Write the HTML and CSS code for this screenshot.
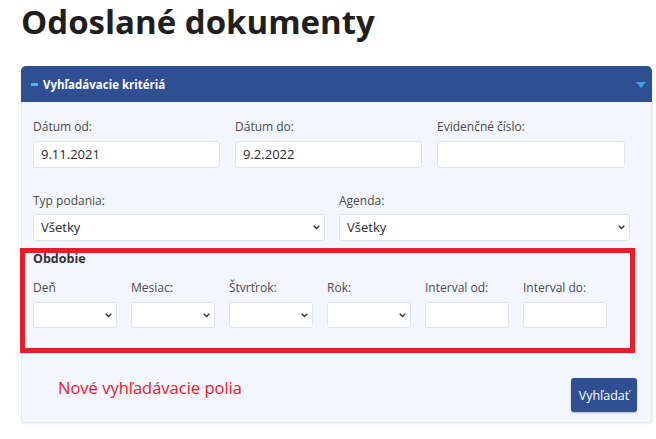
FILE: index.html
```html
<!DOCTYPE html>
<html lang="sk">
<head>
<meta charset="utf-8">
<title>Odoslané dokumenty</title>
<link rel="stylesheet" href="styles.css">
</head>
<body>
<h1 class="title">Odoslané dokumenty</h1>
<div class="card">
  <div class="card-head">
    <span class="dash"></span>
    <span class="head-text">Vyhľadávacie kritériá</span>
    <svg class="head-caret" width="10" height="6" viewBox="0 0 10 6"><path d="M0 0 H10 L5 6 Z" fill="#3ba2e6"/></svg>
  </div>
  <div class="card-body">
    <div class="row row3">
      <div class="field"><div class="label">Dátum od:</div><div class="input">9.11.2021</div></div>
      <div class="field"><div class="label">Dátum do:</div><div class="input">9.2.2022</div></div>
      <div class="field"><div class="label">Evidenčné číslo:</div><div class="input"></div></div>
    </div>
    <div class="row row2">
      <div class="field"><div class="label">Typ podania:</div><div class="input select"><span>Všetky</span><svg class="chev" width="7" height="5" viewBox="0 0 7 5"><path d="M0.7 0.8 L3.5 3.6 L6.3 0.8" fill="none" stroke="#333" stroke-width="1.4"/></svg></div></div>
      <div class="field"><div class="label">Agenda:</div><div class="input select"><span>Všetky</span><svg class="chev" width="7" height="5" viewBox="0 0 7 5"><path d="M0.7 0.8 L3.5 3.6 L6.3 0.8" fill="none" stroke="#333" stroke-width="1.4"/></svg></div></div>
    </div>
    <div class="period">
      <div class="period-title">Obdobie</div>
      <div class="row row6">
        <div class="field"><div class="label">Deň</div><div class="input select small"><span></span><svg class="chev" width="7" height="5" viewBox="0 0 7 5"><path d="M0.7 0.8 L3.5 3.6 L6.3 0.8" fill="none" stroke="#333" stroke-width="1.4"/></svg></div></div>
        <div class="field"><div class="label">Mesiac:</div><div class="input select small"><span></span><svg class="chev" width="7" height="5" viewBox="0 0 7 5"><path d="M0.7 0.8 L3.5 3.6 L6.3 0.8" fill="none" stroke="#333" stroke-width="1.4"/></svg></div></div>
        <div class="field"><div class="label">Štvrťrok:</div><div class="input select small"><span></span><svg class="chev" width="7" height="5" viewBox="0 0 7 5"><path d="M0.7 0.8 L3.5 3.6 L6.3 0.8" fill="none" stroke="#333" stroke-width="1.4"/></svg></div></div>
        <div class="field"><div class="label">Rok:</div><div class="input select small"><span></span><svg class="chev" width="7" height="5" viewBox="0 0 7 5"><path d="M0.7 0.8 L3.5 3.6 L6.3 0.8" fill="none" stroke="#333" stroke-width="1.4"/></svg></div></div>
        <div class="field"><div class="label">Interval od:</div><div class="input small"></div></div>
        <div class="field"><div class="label">Interval do:</div><div class="input small"></div></div>
      </div>
      <div class="frame"></div>
    </div>
    <div class="footer">
      <div class="note">Nové vyhľadávacie polia</div>
      <button class="btn">Vyhľadať</button>
    </div>
  </div>
</div>
</body>
</html>
```

FILE: styles.css
```css
html, body {
  margin: 0;
  padding: 0;
  background: #ffffff;
}
body {
  font-family: "Open Sans", "Noto Sans", sans-serif;
  color: #333;
  width: 656px;
  height: 439px;
  overflow: hidden;
}
.title {
  margin: 0;
  padding-left: 21px;
  font-size: 33px;
  line-height: 44px;
  font-weight: 700;
  color: #1f1f1f;
}
.card {
  margin: 22px 0 0 21px;
  width: 631px;
  border: 1px solid #e4e8ef;
  border-top: none;
  border-radius: 5px 5px 3px 3px;
  background: #f3f6fc;
  box-sizing: border-box;
  box-shadow: 1px 1px 3px rgba(0,0,0,0.06);
}
.card-head {
  height: 36px;
  background: #2f4f93;
  border-radius: 5px 5px 0 0;
  margin: 0 -1px;
  display: flex;
  align-items: center;
  padding: 0 10px 0 10px;
}
.dash {
  width: 7px;
  height: 3px;
  background: #5cb0ee;
  margin-right: 5px;
  margin-top: 1px;
}
.head-text {
  color: #fff;
  font-weight: 700;
  font-size: 11.5px;
  flex: 1;
}
.head-caret {
  margin-right: -4px;
  margin-top: 1px;
}
.card-body {
  padding: 15px 14px 10px 11px;
}
.row {
  display: grid;
}
.row3 {
  grid-template-columns: 187px 187px 188px;
  column-gap: 15px;
}
.row2 {
  grid-template-columns: 292px 291px;
  column-gap: 14px;
  margin-top: 23px;
}
.row6 {
  grid-template-columns: repeat(6, 84px);
  column-gap: 14px;
  margin-top: 10px;
}
.label {
  font-size: 12px;
  line-height: 20px;
  color: #4a4a4a;
  margin-bottom: 4px;
  white-space: nowrap;
}
.row2 .label {
  margin-bottom: 3px;
}
.input {
  height: 27px;
  box-sizing: border-box;
  background: #fff;
  border: 1px solid #dfe3ea;
  border-radius: 3px;
  font-size: 13px;
  line-height: 25px;
  padding: 0 7px;
  color: #2a2a2a;
}
.select {
  display: flex;
  align-items: center;
  justify-content: space-between;
  padding-right: 4px;
}
.small {
  height: 26px;
}
.period {
  position: relative;
  margin-top: 9px;
}
.period-title {
  font-size: 12.5px;
  font-weight: 700;
  line-height: 18px;
  color: #333;
}
.frame {
  position: absolute;
  left: -13px;
  top: -2px;
  right: 2px;
  bottom: -25px;
  border: 5px solid #e41e26;
  pointer-events: none;
}
.footer {
  display: flex;
  align-items: flex-start;
  justify-content: space-between;
  margin-top: 50px;
}
.note {
  color: #e2202a;
  font-size: 16.5px;
  line-height: 20px;
  padding-left: 25px;
}
.btn {
  height: 34px;
  width: 66px;
  background: #2f4f93;
  color: #fff;
  border: none;
  border-radius: 3px;
  font-family: "Open Sans", sans-serif;
  font-size: 12.5px;
  padding: 0;
  box-shadow: 0 1px 2px rgba(0,0,0,0.25);
}
```
